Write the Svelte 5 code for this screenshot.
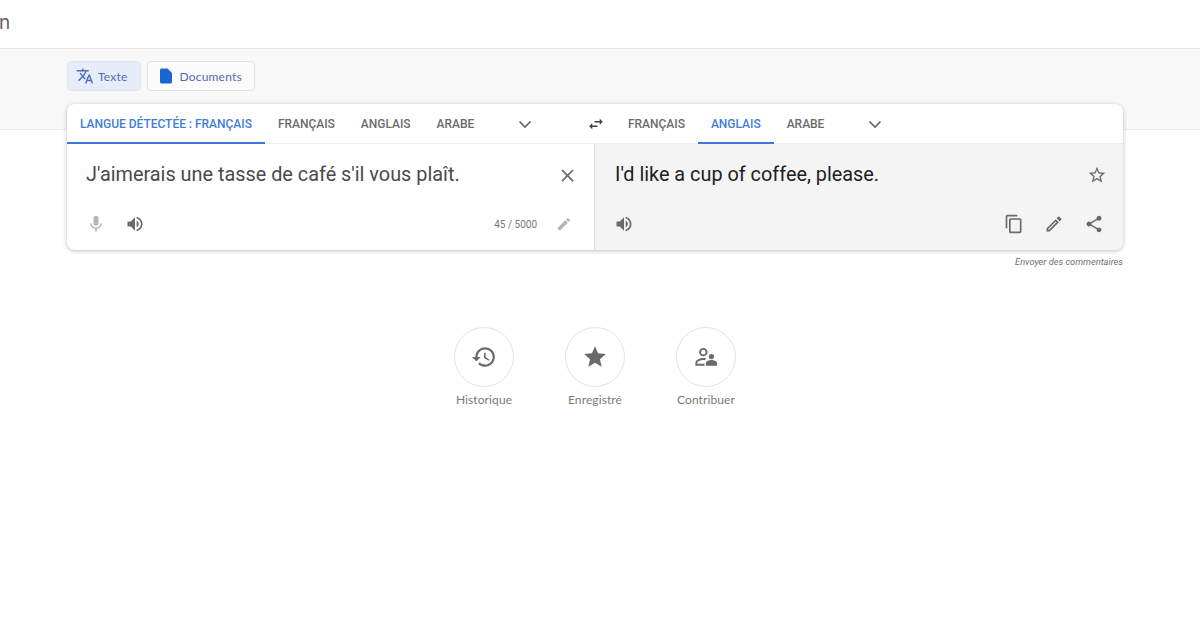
<script>
  const icons = {
    translate: 'M12.87 15.07l-2.54-2.51.03-.03c1.74-1.94 2.98-4.17 3.71-6.53H17V4h-7V2H8v2H1v1.99h11.17C11.5 7.92 10.44 9.75 9 11.35 8.07 10.32 7.3 9.19 6.69 8h-2c.73 1.63 1.73 3.17 2.98 4.56l-5.09 5.02L4 19l5-5 3.11 3.11.76-2.04zM18.5 10h-2L12 22h2l1.12-3h4.75L21 22h2l-4.5-12zm-2.62 7l1.62-4.33L19.12 17h-3.24z',
    file: 'M14 2H6c-1.1 0-1.99.9-1.99 2L4 20c0 1.1.89 2 1.99 2H18c1.1 0 2-.9 2-2V8l-6-6z',
    swap: 'M6.99 11L3 15l3.99 4v-3H14v-2H6.99v-3zM21 9l-3.99-4v3H10v2h7.01v3L21 9z',
    close: 'M19 6.41L17.59 5 12 10.59 6.41 5 5 6.41 10.59 12 5 17.59 6.41 19 12 13.41 17.59 19 19 17.59 13.41 12z',
    starOutline: 'M22 9.24l-7.19-.62L12 2 9.19 8.63 2 9.24l5.46 4.73L5.82 21 12 17.27 18.18 21l-1.63-7.03L22 9.24zM12 15.4l-3.76 2.27 1-4.28-3.32-2.88 4.38-.38L12 6.1l1.71 4.04 4.38.38-3.32 2.88 1 4.28L12 15.4z',
    star: 'M12 17.27L18.18 21l-1.64-7.03L22 9.24l-7.19-.61L12 2 9.19 8.63 2 9.24l5.46 4.73L5.82 21z',
    mic: 'M12 14c1.66 0 2.99-1.34 2.99-3L15 5c0-1.66-1.34-3-3-3S9 3.34 9 5v6c0 1.66 1.34 3 3 3zm5.3-3c0 3-2.54 5.1-5.3 5.1S6.7 14 6.7 11H5c0 3.41 2.72 6.23 6 6.72V21h2v-3.28c3.28-.48 6-3.3 6-6.72h-1.7z',
    volume: 'M3 9v6h4l5 5V4L7 9H3zm13.5 3c0-1.77-1.02-3.29-2.5-4.03v8.05c1.48-.73 2.5-2.25 2.5-4.02zM14 3.23v2.06c2.89.86 5 3.54 5 6.71s-2.11 5.85-5 6.71v2.06c4.01-.91 7-4.49 7-8.77s-2.99-7.86-7-8.77z',
    edit: 'M3 17.25V21h3.75L17.81 9.94l-3.75-3.75L3 17.25zM20.71 7.04c.39-.39.39-1.02 0-1.41l-2.34-2.34c-.39-.39-1.02-.39-1.41 0l-1.83 1.83 3.75 3.75 1.83-1.83z',
    editOutline: 'M14.06 9.02l.92.92L5.92 19H5v-.92l9.06-9.06M17.66 3c-.25 0-.51.1-.7.29l-1.83 1.83 3.75 3.75 1.83-1.83c.39-.39.39-1.02 0-1.41l-2.34-2.34c-.2-.2-.45-.29-.71-.29zm-3.6 3.19L3 17.25V21h3.75L17.81 9.94l-3.75-3.75z',
    copy: 'M16 1H4c-1.1 0-2 .9-2 2v14h2V3h12V1zm3 4H8c-1.1 0-2 .9-2 2v14c0 1.1.9 2 2 2h11c1.1 0 2-.9 2-2V7c0-1.1-.9-2-2-2zm0 16H8V7h11v14z',
    share: 'M18 16.08c-.76 0-1.44.3-1.96.77L8.91 12.7c.05-.23.09-.46.09-.7s-.04-.47-.09-.7l7.05-4.11c.54.5 1.25.81 2.04.81 1.66 0 3-1.34 3-3s-1.34-3-3-3-3 1.34-3 3c0 .24.04.47.09.7L8.04 9.81C7.5 9.31 6.79 9 6 9c-1.66 0-3 1.34-3 3s1.34 3 3 3c.79 0 1.5-.31 2.04-.81l7.12 4.16c-.05.21-.08.43-.08.65 0 1.61 1.31 2.92 2.92 2.92 1.61 0 2.92-1.31 2.92-2.92s-1.31-2.92-2.92-2.92z',
    history: 'M13 3c-4.97 0-9 4.03-9 9H1l3.89 3.89.07.14L9 12H6c0-3.87 3.13-7 7-7s7 3.13 7 7-3.13 7-7 7c-1.93 0-3.68-.79-4.94-2.06l-1.42 1.42C8.27 19.99 10.51 21 13 21c4.97 0 9-4.03 9-9s-4.03-9-9-9zm-1 5v5l4.28 2.54.72-1.21-3.5-2.08V8H12z',
    contribute: 'M9.5 3.6a3.9 3.9 0 1 1 0 7.8 3.9 3.9 0 0 1 0-7.8zm0 1.8a2.1 2.1 0 1 0 0 4.2 2.1 2.1 0 0 0 0-4.2zM2.2 20v-2.6c0-2.7 4.4-4.4 7.3-4.4.9 0 1.8.15 2.7.4l-1.3 1.6c-.5-.1-1-.2-1.4-.2-2.4 0-5.5 1.4-5.5 2.6v.8h6.6V20H2.2zM17 9.2a2.4 2.4 0 1 1 0 4.8 2.4 2.4 0 0 1 0-4.8zM11.8 20v-2.4c0-1.7 3.4-2.8 5.2-2.8s5.2 1.1 5.2 2.8V20H11.8z'
  };

  const sourceTabs = ['FRANÇAIS', 'ANGLAIS', 'ARABE'];
  const shortcuts = [
    { label: 'Historique', icon: icons.history },
    { label: 'Enregistré', icon: icons.star },
    { label: 'Contribuer', icon: icons.contribute }
  ];
</script>

{#snippet icon(path, size, cls = '')}
  <svg class={cls} width={size} height={size} viewBox="0 0 24 24" aria-hidden="true"><path d={path} /></svg>
{/snippet}

{#snippet chevron()}
  <svg class="chevron" width="24" height="24" viewBox="0 0 24 24" aria-hidden="true"><path d="M6.5 9.5L12 15l5.5-5.5" /></svg>
{/snippet}

<header class="top"><span class="brand">n</span></header>

<section class="band">
  <div class="modes">
    <button class="mode active">{@render icon(icons.translate, 18, 'blue')}Texte</button>
    <button class="mode">{@render icon(icons.file, 18, 'solid-blue')}Documents</button>
  </div>
</section>

<main class="wrap">
  <div class="card">
    <div class="tabs">
      <div class="tab-side left">
        <span class="tab selected">LANGUE DÉTECTÉE : FRANÇAIS</span>
        {#each sourceTabs as tab}<span class="tab">{tab}</span>{/each}
        {@render chevron()}
      </div>
      <div class="swap">{@render icon(icons.swap, 18, 'dark')}</div>
      <div class="tab-side right">
        <span class="tab">FRANÇAIS</span>
        <span class="tab selected">ANGLAIS</span>
        <span class="tab">ARABE</span>
        {@render chevron()}
      </div>
    </div>
    <div class="panes">
      <div class="pane source">
        <div class="line">
          <p class="text">J'aimerais une tasse de café s'il vous plaît.</p>
          {@render icon(icons.close, 21, 'mid')}
        </div>
        <div class="tools">
          {@render icon(icons.mic, 20, 'light')}
          {@render icon(icons.volume, 20, 'mid')}
          <span class="count">45 / 5000</span>
          {@render icon(icons.edit, 16, 'light')}
        </div>
      </div>
      <div class="pane target">
        <div class="line">
          <p class="text">I'd like a cup of coffee, please.</p>
          {@render icon(icons.starOutline, 20, 'mid')}
        </div>
        <div class="tools">
          {@render icon(icons.volume, 20, 'mid')}
          <span class="spacer"></span>
          {@render icon(icons.copy, 20, 'mid')}
          {@render icon(icons.editOutline, 20, 'mid')}
          {@render icon(icons.share, 20, 'mid')}
        </div>
      </div>
    </div>
  </div>
  <p class="feedback">Envoyer des commentaires</p>

  <nav class="shortcuts">
    {#each shortcuts as item}
      <div class="shortcut">
        <span class="circle">{@render icon(item.icon, 26, 'mid')}</span>
        <span class="label">{item.label}</span>
      </div>
    {/each}
  </nav>
</main>

<style>
  :global(body) {
    margin: 0;
    background: #fff;
    font-family: Roboto, "Liberation Sans", sans-serif;
  }

  svg {
    display: block;
    flex: none;
    fill: #5f6368;
  }

  svg.blue { fill: #4a6fc0; }
  svg.solid-blue { fill: #1a66d2; }
  svg.dark { fill: #3c4043; }
  svg.mid { fill: #6a6a6a; }
  svg.light { fill: #b5b5b5; }

  .top {
    display: flex;
    align-items: center;
    box-sizing: content-box;
    height: 44px;
    padding-bottom: 4px;
    overflow: hidden;
    border-bottom: 1px solid #e4e5e7;
  }

  .brand {
    color: #5f6368;
    font-family: Inter, sans-serif;
    font-size: 19px;
    margin-left: -1px;
  }

  .band {
    box-sizing: border-box;
    height: 81px;
    padding: 12px 0 0 67px;
    background: #f8f8f8;
    border-bottom: 1px solid #e8e9eb;
  }

  .modes {
    display: flex;
    gap: 6px;
  }

  .mode {
    display: flex;
    align-items: center;
    gap: 4px;
    box-sizing: border-box;
    height: 30px;
    padding: 0 12px 0 9px;
    border: 1px solid #e2e3e6;
    border-radius: 4px;
    background: #fbfbfc;
    color: #4f6cb0;
    font-family: Lato, sans-serif;
    font-size: 12px;
    letter-spacing: 0.2px;
  }

  .mode.active {
    background: #e6edf8;
    border-color: #dfe6f2;
    padding: 0 13px 0 8px;
  }

  .wrap {
    width: 1056px;
    margin: -26px 0 0 67px;
    position: relative;
  }

  .card {
    border-radius: 8px;
    background: #fff;
    box-shadow: 0 1px 4px 0 rgba(60, 64, 67, 0.34);
    overflow: hidden;
  }

  .tabs {
    display: flex;
    height: 40px;
    border-bottom: 1px solid #ececec;
    box-sizing: border-box;
  }

  .tab-side {
    display: flex;
    align-items: stretch;
  }

  .tab-side.left { width: 509px; }
  .tab-side.right { flex: 1; }

  .tab {
    display: flex;
    align-items: center;
    height: 40px;
    box-sizing: border-box;
    padding: 0 13px;
    color: #6b6b6b;
    font-size: 12px;
    font-weight: 500;
    letter-spacing: -0.02px;
    white-space: nowrap;
  }

  .tab.selected {
    color: #3f7ed6;
    border-bottom: 2px solid #3b78d8;
    padding-top: 2px;
  }

  .chevron {
    align-self: center;
    margin-left: 26px;
    fill: none;
    stroke: #5f6368;
    stroke-width: 1.6;
  }

  .swap {
    display: flex;
    align-items: center;
    justify-content: center;
    width: 39px;
  }

  .panes {
    display: flex;
    height: 106px;
  }

  .pane {
    box-sizing: border-box;
    display: flex;
    flex-direction: column;
    justify-content: space-between;
    padding: 19px 16px 14px 19px;
  }

  .source {
    width: 528px;
    border-right: 1px solid #dedede;
  }

  .source .tools {
    gap: 19px;
    margin-right: 6px;
  }

  .target {
    flex: 1;
    background: #f4f4f5;
    padding-left: 20px;
    padding-right: 19px;
  }

  .target .line {
    margin-right: -3px;
  }

  .target .tools {
    margin-left: -1px;
  }

  .line {
    display: flex;
    align-items: center;
    justify-content: space-between;
    height: 24px;
  }

  .text {
    margin: 0;
    font-size: 19.85px;
    line-height: 24px;
    color: #202124;
  }

  .source .text {
    color: #4a4a4a;
  }

  .tools {
    display: flex;
    align-items: center;
    height: 24px;
    gap: 20px;
  }

  .count {
    margin-left: auto;
    color: #777;
    font-size: 10px;
  }

  .spacer { flex: 1; }

  .feedback {
    margin: 6px 0 0;
    text-align: right;
    color: #6f6f6f;
    font-size: 9.25px;
    font-style: italic;
  }

  .shortcuts {
    display: flex;
    justify-content: center;
    gap: 51px;
    margin-top: 60px;
  }

  .shortcut {
    display: flex;
    flex-direction: column;
    align-items: center;
    gap: 5px;
    width: 60px;
  }

  .circle {
    display: flex;
    align-items: center;
    justify-content: center;
    box-sizing: border-box;
    width: 60px;
    height: 60px;
    border: 1px solid #e3e3e3;
    border-radius: 50%;
  }

  .label {
    color: #7a7a7a;
    font-family: Lato, sans-serif;
    font-size: 12px;
    letter-spacing: 0.1px;
    white-space: nowrap;
  }
</style>
